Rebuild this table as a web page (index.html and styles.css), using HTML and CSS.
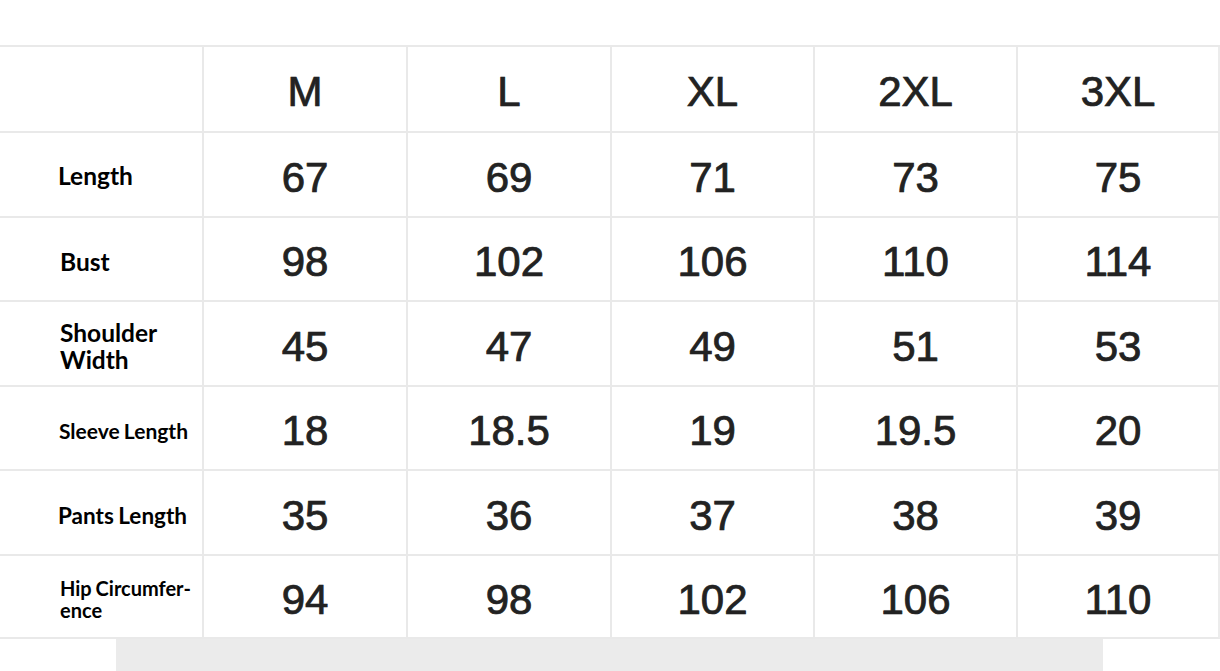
FILE: index.html
```html
<!DOCTYPE html>
<html lang="en">
<head>
<meta charset="utf-8">
<title>Size Chart</title>
<link rel="stylesheet" href="styles.css">
</head>
<body>
<div class="page">
  <div class="chart">
    <div class="cell label"></div>
    <div class="cell num head">M</div>
    <div class="cell num head">L</div>
    <div class="cell num head">XL</div>
    <div class="cell num head">2XL</div>
    <div class="cell num head last">3XL</div>

    <div class="cell label l-length">Length</div>
    <div class="cell num">67</div>
    <div class="cell num">69</div>
    <div class="cell num">71</div>
    <div class="cell num">73</div>
    <div class="cell num last">75</div>

    <div class="cell label l-bust">Bust</div>
    <div class="cell num">98</div>
    <div class="cell num">102</div>
    <div class="cell num">106</div>
    <div class="cell num">110</div>
    <div class="cell num last">114</div>

    <div class="cell label l-shoulder">Shoulder<br>Width</div>
    <div class="cell num">45</div>
    <div class="cell num">47</div>
    <div class="cell num">49</div>
    <div class="cell num">51</div>
    <div class="cell num last">53</div>

    <div class="cell label l-sleeve">Sleeve Length</div>
    <div class="cell num">18</div>
    <div class="cell num">18.5</div>
    <div class="cell num">19</div>
    <div class="cell num">19.5</div>
    <div class="cell num last">20</div>

    <div class="cell label l-pants">Pants Length</div>
    <div class="cell num">35</div>
    <div class="cell num">36</div>
    <div class="cell num">37</div>
    <div class="cell num">38</div>
    <div class="cell num last">39</div>

    <div class="cell label l-hip">Hip Circumfer-<br>ence</div>
    <div class="cell num">94</div>
    <div class="cell num">98</div>
    <div class="cell num">102</div>
    <div class="cell num">106</div>
    <div class="cell num last">110</div>
  </div>
  <div class="footer-bar"></div>
</div>
</body>
</html>
```

FILE: styles.css
```css
html, body {
  margin: 0;
  padding: 0;
  background: #ffffff;
  overflow: hidden;
}

.page {
  width: 1220px;
  height: 671px;
  padding-top: 45px;
  box-sizing: border-box;
  display: flex;
  flex-direction: column;
}

.chart {
  display: grid;
  grid-template-columns: 204px 204px 204px 203px 203px 202px;
  grid-template-rows: 86px 85px 84px 85px 84px 85px 83px;
  border-top: 2px solid #e9e9e9;
  width: 1220px;
  box-sizing: border-box;
}

.cell {
  border-right: 2px solid #e9e9e9;
  border-bottom: 2px solid #e9e9e9;
  box-sizing: border-box;
  display: flex;
  align-items: center;
}

.cell.last {
  border-right: 2px solid #ececec;
}

.num {
  justify-content: center;
  font-family: "Liberation Sans", Arial, sans-serif;
  font-size: 42px;
  color: #222222;
  padding-top: 6px;
  -webkit-text-stroke: 0.7px #222222;
  text-shadow: 0 0 1px rgba(0,0,0,0.4);
}

.head {
  padding-top: 6px;
}

.label {
  justify-content: flex-start;
  padding-left: 59px;
  font-family: Lato, "Open Sans", sans-serif;
  font-weight: 700;
  color: #000000;
  word-spacing: -1px;
}

.l-length { font-size: 24.5px; padding-top: 2px; padding-left: 58px; }
.l-bust { font-size: 24.5px; padding-top: 4px; padding-left: 60px; }
.l-shoulder { font-size: 24.5px; line-height: 27px; padding-top: 4px; padding-left: 60px; }
.l-sleeve { font-size: 21px; padding-top: 4px; padding-left: 59px; }
.l-pants { font-size: 22.5px; padding-top: 6px; padding-left: 58px; }
.l-hip { font-size: 20px; line-height: 22px; padding-top: 4px; padding-left: 60px; }

.footer-bar {
  margin-left: 116px;
  width: 987px;
  flex: 1;
  background: #ebebeb;
}
```
